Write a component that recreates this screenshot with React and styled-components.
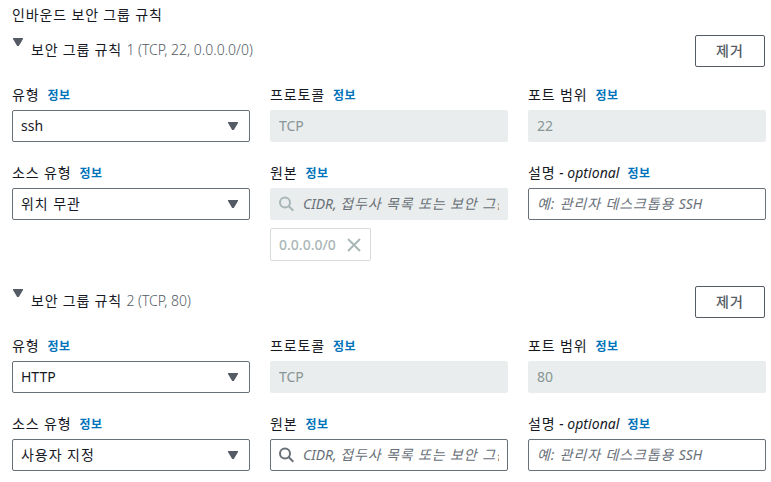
import React from "react";
import styled, { createGlobalStyle, css } from "styled-components";

const GlobalStyle = createGlobalStyle`
  * { box-sizing: border-box; }
  body {
    margin: 0;
    background: #fff;
    color: #16191f;
    font: 14px/22px "Noto Sans", "Noto Sans CJK KR", sans-serif;
  }
`;

const Page = styled.main`
  width: 771px;
  height: 482px;
  padding: 4px 5px 0 12px;
  overflow: hidden;
`;

const Title = styled.h2`
  margin: 0 0 9px;
  height: 22px;
  font-size: 14px;
  font-weight: 400;
  letter-spacing: 0.85px;
  white-space: nowrap;
`;

const Rule = styled.section`
  height: 251px;
`;

const RuleHeader = styled.header`
  display: flex;
  align-items: flex-start;
  height: 32px;
  margin-bottom: 17px;
  padding-right: 1px;
`;

const Toggle = styled.svg`
  flex: none;
  width: 10px;
  height: 8px;
  margin: 3px 8px 0 1px;
  fill: #545b64;
`;

const RuleName = styled.h3`
  flex: 1;
  margin: 4px 0 0;
  font-size: 14px;
  font-weight: 400;
  letter-spacing: 0.8px;
  white-space: nowrap;
`;

const RuleDetail = styled.span`
  color: #545b64;
  font-weight: 300;
  letter-spacing: 0;
`;

const RemoveButton = styled.button`
  width: 70px;
  height: 32px;
  padding: 0;
  border: 1px solid #545b64;
  border-radius: 2px;
  background: #fff;
  color: #545b64;
  font: 500 14px/28px "Noto Sans", "Noto Sans CJK KR", sans-serif;
  letter-spacing: 1px;
`;

const Fields = styled.div`
  display: grid;
  grid-template-columns: repeat(3, 238px);
  column-gap: 20px;
  row-gap: 20px;
`;

const Field = styled.div`
  min-width: 0;
`;

const Label = styled.div`
  display: flex;
  align-items: baseline;
  gap: 8px;
  height: 22px;
  margin-bottom: 4px;
  white-space: nowrap;
`;

const LabelText = styled.span`
  font-weight: 400;
  letter-spacing: 0.85px;
`;

const Optional = styled.em`
  font-weight: 400;
  letter-spacing: 0.05px;
`;

const Info = styled.a`
  color: #0073bb;
  font-size: 12px;
  font-weight: 600;
  letter-spacing: 0.6px;
`;

const Control = styled.div`
  display: flex;
  align-items: center;
  height: 32px;
  padding: 0 ${(p) => (p.$select ? 11 : 8)}px 0 8px;
  border: 1px solid #687078;
  border-radius: 2px;
  background: #fff;
  ${(p) =>
    p.$disabled &&
    css`
      border-color: #eaeded;
      background: #eaeded;
      color: #879596;
    `}
`;

const Value = styled.span`
  flex: 1;
  overflow: hidden;
  white-space: nowrap;
  letter-spacing: ${(p) => (p.$korean ? 0.95 : 0)}px;
`;

const Placeholder = styled.span`
  flex: 1;
  overflow: hidden;
  padding-left: ${(p) => (p.$inset ? 1 : 0)}px;
  color: #687078;
  font-style: italic;
  letter-spacing: 0.87px;
  white-space: nowrap;
`;

const Latin = styled.span`
  letter-spacing: 0;
`;

const Caret = styled.svg`
  flex: none;
  width: 10px;
  height: 8px;
  fill: #545b64;
`;

const SearchIcon = styled.svg`
  flex: none;
  width: 16px;
  height: 16px;
  margin-right: 7px;
  fill: none;
  stroke: ${(p) => (p.$disabled ? "#aab7b8" : "#687078")};
  stroke-width: 2;
`;

const Token = styled.div`
  display: flex;
  align-items: center;
  justify-content: space-between;
  width: 101px;
  height: 33px;
  margin-top: 8px;
  padding: 0 9px 0 8px;
  border: 1px solid #d5dbdb;
  border-radius: 2px;
  color: #aab7b8;
  font-weight: 500;
`;

const CloseIcon = styled.svg`
  width: 14px;
  height: 14px;
  stroke: #aab7b8;
  stroke-width: 2;
`;

const trianglePath = "M0 0H10V1L5.8 8H4.2L0 1Z";

function FieldLabel({ text, optional }) {
  return (
    <Label>
      <LabelText>
        {text}
        {optional && <Optional> - optional</Optional>}
      </LabelText>
      <Info>정보</Info>
    </Label>
  );
}

function Select({ label, value, korean }) {
  return (
    <Field>
      <FieldLabel text={label} />
      <Control $select>
        <Value $korean={korean}>{value}</Value>
        <Caret viewBox="0 0 10 8">
          <path d={trianglePath} />
        </Caret>
      </Control>
    </Field>
  );
}

function ReadOnly({ label, value }) {
  return (
    <Field>
      <FieldLabel text={label} />
      <Control $disabled>
        <Value>{value}</Value>
      </Control>
    </Field>
  );
}

function Source({ token }) {
  const disabled = Boolean(token);
  return (
    <Field>
      <FieldLabel text="원본" />
      <Control $disabled={disabled}>
        <SearchIcon viewBox="0 0 16 16" $disabled={disabled}>
          <circle cx="6" cy="6.5" r="5" />
          <path d="M9.5 10L14.3 14.8" />
        </SearchIcon>
        <Placeholder $inset>
          <Latin>CIDR, </Latin>접두사 목록 또는 보안 그룹
        </Placeholder>
      </Control>
      {token && (
        <Token>
          {token}
          <CloseIcon viewBox="0 0 14 14">
            <path d="M1 1L13 13M13 1L1 13" />
          </CloseIcon>
        </Token>
      )}
    </Field>
  );
}

function SecurityRule({ number, detail, type, port, sourceType, token }) {
  return (
    <Rule>
      <RuleHeader>
        <Toggle viewBox="0 0 10 8">
          <path d={trianglePath} />
        </Toggle>
        <RuleName>
          보안 그룹 규칙{" "}
          <RuleDetail>
            {number} ({detail})
          </RuleDetail>
        </RuleName>
        <RemoveButton>제거</RemoveButton>
      </RuleHeader>
      <Fields>
        <Select label="유형" value={type} />
        <ReadOnly label="프로토콜" value="TCP" />
        <ReadOnly label="포트 범위" value={port} />
        <Select label="소스 유형" value={sourceType} korean />
        <Source token={token} />
        <Field>
          <FieldLabel text="설명" optional />
          <Control>
            <Placeholder>
              예: 관리자 데스크톱용 <Latin>SSH</Latin>
            </Placeholder>
          </Control>
        </Field>
      </Fields>
    </Rule>
  );
}

export default function App() {
  return (
    <>
      <GlobalStyle />
      <Page>
        <Title>인바운드 보안 그룹 규칙</Title>
        <SecurityRule
          number={1}
          detail="TCP, 22, 0.0.0.0/0"
          type="ssh"
          port="22"
          sourceType="위치 무관"
          token="0.0.0.0/0"
        />
        <SecurityRule
          number={2}
          detail="TCP, 80"
          type="HTTP"
          port="80"
          sourceType="사용자 지정"
        />
      </Page>
    </>
  );
}
